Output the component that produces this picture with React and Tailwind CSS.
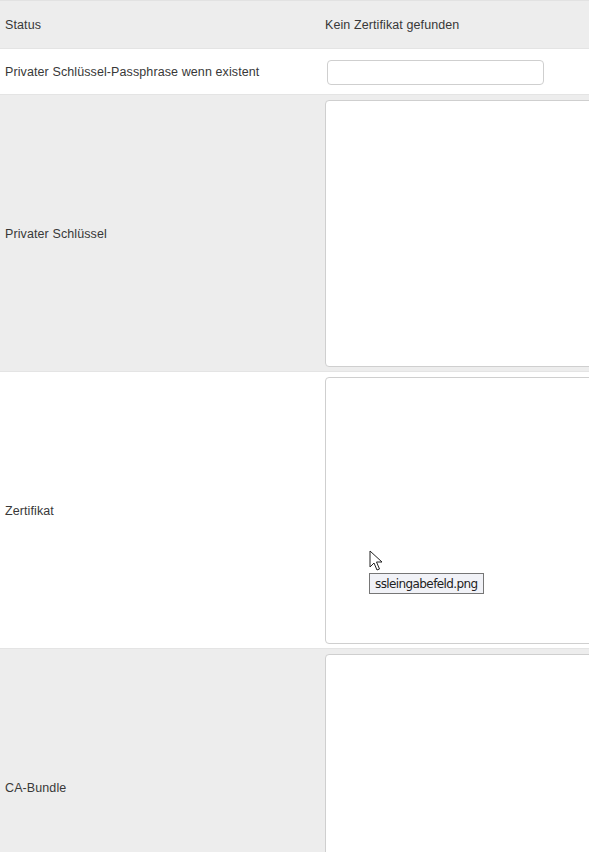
const rows = [
  { label: "Privater Schlüssel", bg: "bg-[#ededed]" },
  { label: "Zertifikat", bg: "bg-white", tooltip: true },
  { label: "CA-Bundle", bg: "bg-[#ededed]" },
];

const Cursor = () => (
  <svg width="14" height="22" viewBox="0 0 14 22" className="block">
    <path
      d="M1 1 L1 17 L5 13 L8 20 L10.5 19 L7.5 12 L13 12 Z"
      fill="white"
      stroke="#222"
      strokeWidth="1"
      strokeLinejoin="miter"
    />
  </svg>
);

export default function App() {
  return (
    <div className="w-[589px] h-[852px] overflow-hidden bg-white text-[12.5px] tracking-[0.1px] text-[#383838] font-['Liberation_Sans',Arial,sans-serif]">
      <div className="w-[640px]">
        {/* status row */}
        <div className="flex h-[49px] items-center pt-[2px] bg-[#ededed] border-t border-[#e2e2e2] border-b border-b-[#e4e4e4]">
          <div className="w-[319px] pl-[5px]">Status</div>
          <div className="pl-[6px]">Kein Zertifikat gefunden</div>
        </div>

        {/* passphrase row */}
        <div className="flex h-[46px] items-center bg-white border-b border-[#e4e4e4]">
          <div className="w-[319px] pl-[5px] pt-[1px]">Privater Schlüssel-Passphrase wenn existent</div>
          <div className="pl-[8px]">
            <input
              type="text"
              className="block w-[217px] h-[25px] mt-[1px] rounded-[4px] border border-[#cfcfcf] bg-white outline-none"
            />
          </div>
        </div>

        {rows.map((row) => (
          <div
            key={row.label}
            className={`flex h-[277px] items-center border-b border-[#e4e4e4] ${row.bg}`}
          >
            <div className="w-[319px] pl-[5px] pt-[2px]">{row.label}</div>
            <div className="relative pl-[6px] pt-[1px]">
              <textarea className="block w-[300px] h-[267px] resize-none rounded-[4px] border border-[#cfcfcf] bg-white outline-none" />
              {row.tooltip && (
                <>
                  <div className="absolute left-[50px] top-[174px]">
                    <Cursor />
                  </div>
                  <div className="absolute left-[50px] top-[197px] border border-[#767676] bg-[#f1f2f7] px-[5px] h-[21px] flex items-center text-[12px] text-[#222] font-['DejaVu_Sans',sans-serif] tracking-[-0.6px] whitespace-nowrap">
                    ssleingabefeld.png
                  </div>
                </>
              )}
            </div>
          </div>
        ))}
      </div>
    </div>
  );
}
